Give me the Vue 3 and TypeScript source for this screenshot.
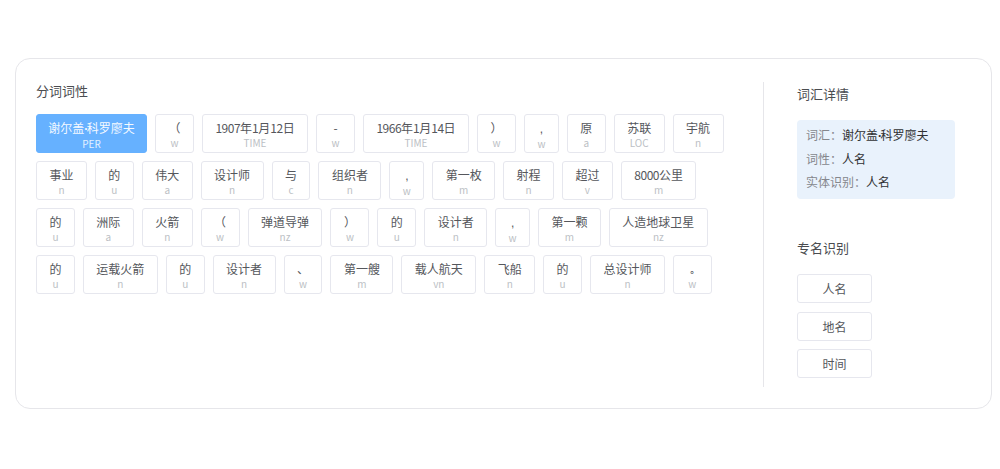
<script setup lang="ts">
interface Token { text: string; tag: string; active?: boolean }
interface Part { text: string; kind: string }
const raw = '谢尔盖·科罗廖夫/PER （/w 1907年1月12日/TIME -/w 1966年1月14日/TIME ）/w ,/w 原/a 苏联/LOC 宇航/n 事业/n 的/u 伟大/a 设计师/n 与/c 组织者/n ,/w 第一枚/m 射程/n 超过/v 8000公里/m 的/u 洲际/a 火箭/n （/w 弹道导弹/nz ）/w 的/u 设计者/n ,/w 第一颗/m 人造地球卫星/nz 的/u 运载火箭/n 的/u 设计者/n 、/w 第一艘/m 载人航天/vn 飞船/n 的/u 总设计师/n 。/w'
const tokens: Token[] = raw.split(' ').map((s, i) => {
  const [text, tag] = s.split('/')
  return { text, tag, active: i === 0 }
})
function parts(text: string): Part[] {
  return text
    .split(/(\d+|·|。|,)/)
    .filter(Boolean)
    .map((t) => ({
      text: t,
      kind: /\d/.test(t) ? 'digits' : t === '·' ? 'dot' : t === '。' ? 'stop' : t === ',' ? 'comma' : '',
    }))
}
const details = [
  { label: '词汇：', value: '谢尔盖·科罗廖夫' },
  { label: '词性：', value: '人名' },
  { label: '实体识别：', value: '人名' },
]
const entities = ['人名', '地名', '时间']
</script>

<template>
  <div class="page">
    <section class="card">
      <div class="left">
        <h3 class="title">分词词性</h3>
        <div class="tokens">
          <div
            v-for="(t, i) in tokens"
            :key="i"
            class="token"
            :class="{ active: t.active, wide: t.text === '-' }"
          >
            <span class="word"><span v-for="(p, j) in parts(t.text)" :key="j" :class="p.kind">{{ p.text }}</span></span>
            <span class="tag">{{ t.tag }}</span>
          </div>
        </div>
      </div>
      <aside class="right">
        <h3 class="title side-title">词汇详情</h3>
        <div class="detail">
          <p v-for="d in details" :key="d.label" class="line">
            <span class="label">{{ d.label }}</span><span class="value"><span v-for="(p, j) in parts(d.value)" :key="j" :class="p.kind">{{ p.text }}</span></span>
          </p>
        </div>
        <h3 class="title entity-title">专名识别</h3>
        <div class="entities">
          <button v-for="e in entities" :key="e" class="entity" type="button">{{ e }}</button>
        </div>
      </aside>
    </section>
  </div>
</template>

<style>
html, body { margin: 0; background: #fff; }
</style>

<style scoped>
.page {
  width: 1000px;
  height: 469px;
  box-sizing: border-box;
  padding: 58px 8px 0 15px;
  font-family: "Noto Sans CJK SC", "Noto Sans", sans-serif;
  color: #303133;
}
.card {
  height: 351px;
  box-sizing: border-box;
  display: flex;
  border: 1px solid #e6e6ea;
  border-radius: 15px;
  padding: 23px 0 21px 20px;
}
.left { width: 727px; }
.title {
  margin: 0;
  font-size: 13px;
  font-weight: 400;
  line-height: 18px;
  color: #4a4c50;
}
.tokens {
  margin-top: 14px;
  width: 700px;
  display: flex;
  flex-wrap: wrap;
  gap: 8px;
}
.token {
  height: 39px;
  box-sizing: border-box;
  padding: 0 12.45px;
  border: 1px solid #e6e7ee;
  border-radius: 3px;
  display: flex;
  flex-direction: column;
  align-items: center;
  color: #55575c;
}
.token.wide { padding: 0 14.45px; }
.word { font-size: 12px; line-height: 16px; margin-top: 5px; white-space: nowrap; }
.tag { font-size: 10px; line-height: 14px; margin-top: 0; color: #bcbfc5; }
.digits { letter-spacing: -0.5px; }
.dot {
  font-family: "Liberation Sans", sans-serif;
  font-weight: 700;
  letter-spacing: -1.5px;
}
.stop {
  display: inline-block;
  font-family: "Noto Sans CJK TC", sans-serif;
  font-weight: 700;
  transform: translateY(3px) scale(0.75);
}
.comma { font-family: "Liberation Sans", sans-serif; }
.token.active {
  padding: 0 11.3px;
  background: #66b1ff;
  border-color: #66b1ff;
  color: #f4f9ff;
}
.token.active .tag { color: #e2f0ff; }
.right {
  flex: 1;
  border-left: 1px solid #e6e6ea;
  padding: 3px 0 0 33px;
}
.detail {
  margin-top: 17px;
  width: 158px;
  height: 79px;
  box-sizing: border-box;
  padding: 4px 9px;
  background: #e9f2fc;
  border-radius: 4px;
}
.line { margin: 0; font-size: 12px; line-height: 22.9px; white-space: nowrap; }
.label { color: #85878c; }
.value { color: #303133; }
.entity-title { margin-top: 40px; }
.entities {
  margin-top: 17px;
  display: flex;
  flex-direction: column;
  gap: 8.5px;
}
.entity {
  width: 75px;
  height: 29px;
  padding: 0;
  background: #fff;
  border: 1px solid #e6e7ee;
  border-radius: 3px;
  font: inherit;
  font-size: 12px;
  color: #55575c;
}
</style>
